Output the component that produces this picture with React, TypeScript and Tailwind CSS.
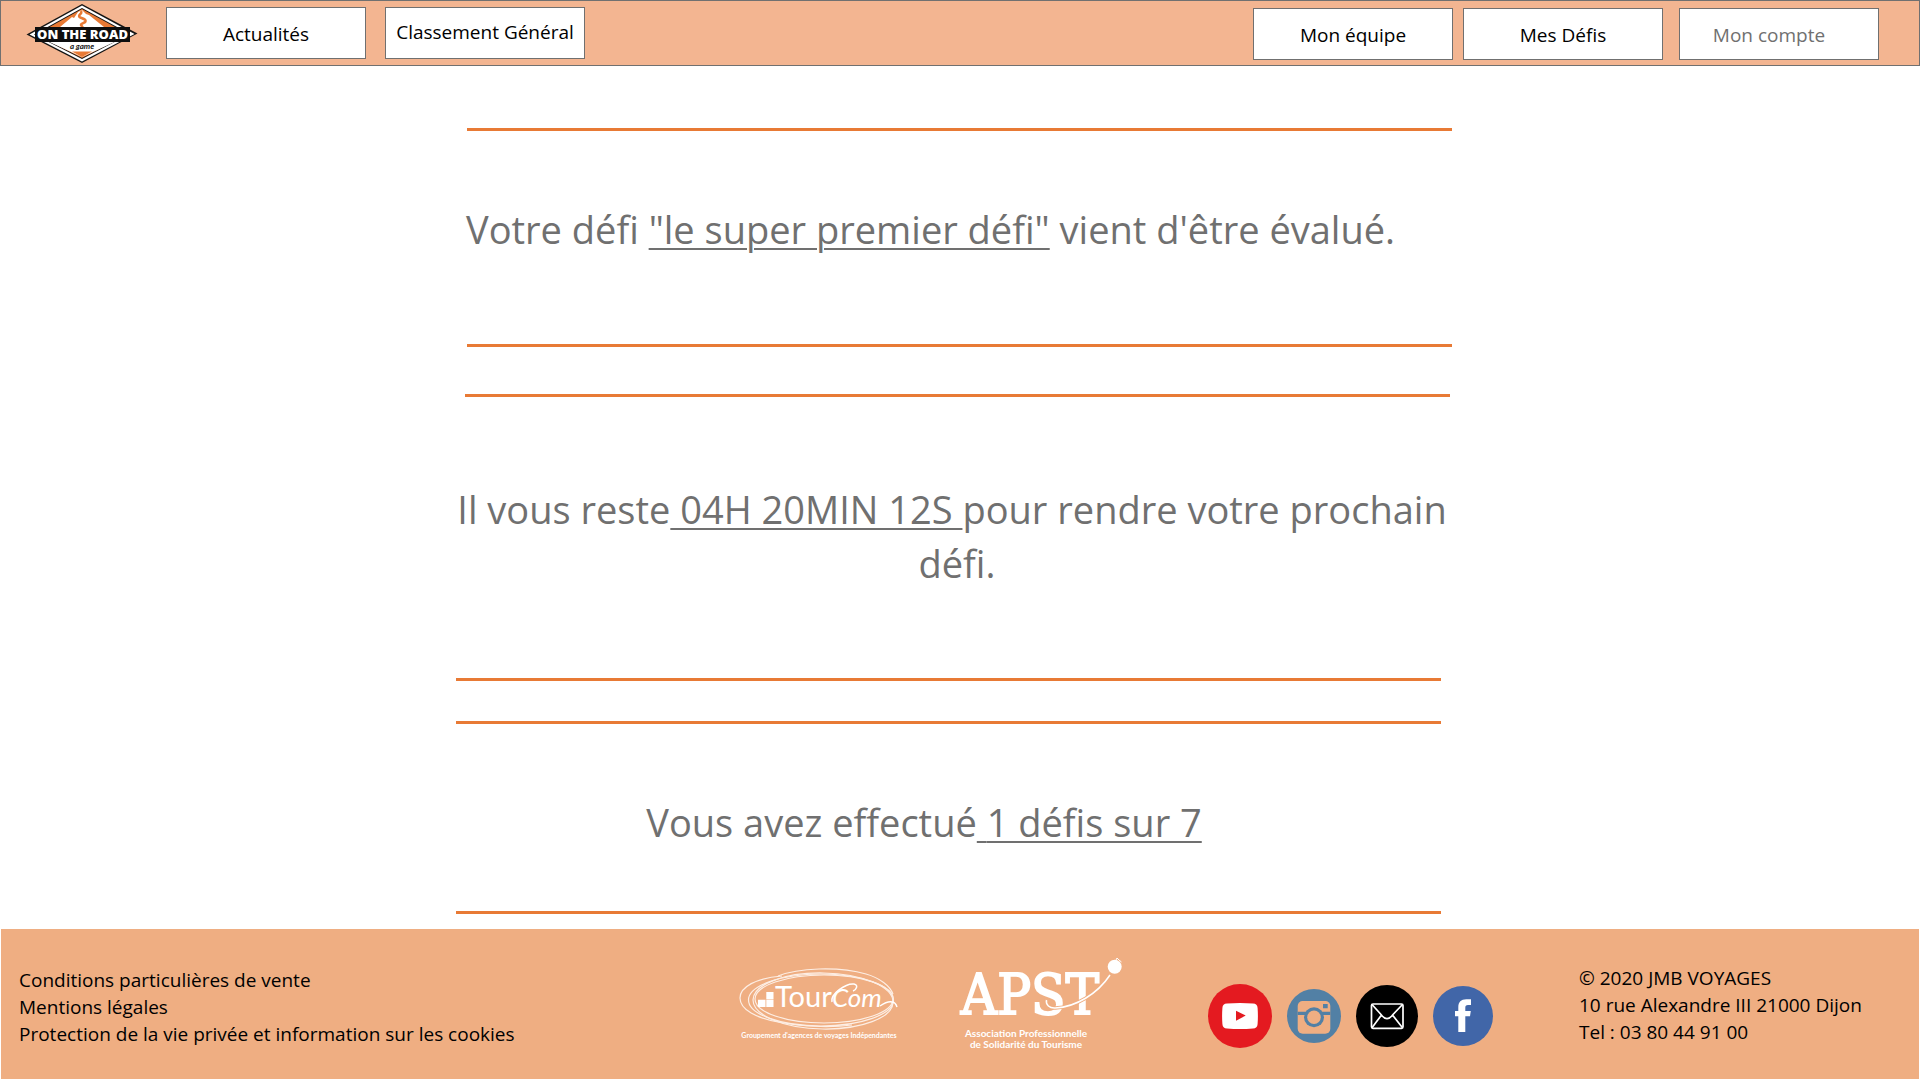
import type { ReactNode } from "react";

function RoadLogo() {
  return (
    <svg viewBox="0 0 112 60" className="h-[60px] w-28" role="img" aria-label="On the Road, a game">
      <path d="M.5 31.500 56 1l55.500 29.500L56 60z" fill="#141414" />
      <path d="M3.500 31.500 56 2.500l52.500 28.500L56 58.500z" fill="#fff" />
      <path d="M8 31.500 56 5l48 26L56 56z" fill="#141414" />
      <path d="M10 31.500 56 6l46 25L56 55z" fill="#e87a35" />
      <path d="M34 24 46 14l2 1 4-6 4-2 4 4 3 1 15 12z" fill="#fff" />
      <path d="M54.500 8c3 2-3 4-1 6 2 1.500 7 2 6 4.500-.5 1.500-5 2-4.500 3.500l2 3" fill="none" stroke="#e87a35" strokeWidth="2.500" />
      <path d="M17 36h78L56 54z" fill="#fff" />
      <path d="M46 48.500h20L56 54z" fill="#e87a35" />
      <path d="M9 24h95v15H9z" fill="#0e0e0e" />
      <text x="56.500" y="36.200" textAnchor="middle" fill="#fff" className="font-['Open_Sans'] text-[13px] font-extrabold">
        ON THE ROAD
      </text>
      <text x="56" y="45.500" textAnchor="middle" fill="#141414" className="font-['Lato'] text-[8px] font-bold italic">
        a game
      </text>
    </svg>
  );
}

function TourComLogo() {
  return (
    <svg viewBox="0 0 200 120" className="h-[120px] w-[200px] shrink-0" role="img" aria-label="TourCom">
      <g fill="none" stroke="#fdeee4" strokeWidth="1.200">
        <ellipse cx="101" cy="60" rx="72.500" ry="26" />
        <ellipse cx="104" cy="59" rx="69" ry="24" />
        <ellipse cx="103" cy="61" rx="70" ry="28" transform="rotate(1 103 61)" />
        <path d="M62 36C36 38 20 47 20 58c0 12 17 20 38 24 22 4 50 6 74 3" />
        <path d="M58 36c20-8 60-10 88-2 14 4 24 12 27 20" />
      </g>
      <path d="M46.300 52h7.200v7.300h-7.200zM38 59.800h7.500V67H38zM46.300 59.800h7.200V67h-7.200z" fill="#fff" />
      <text x="55" y="67" fill="#fff" className="font-['Lato'] text-[29px] font-normal">
        Tour
      </text>
      <text x="112" y="67" fill="#fff" className="font-['Lato'] text-[26px] font-normal italic">
        Com
      </text>
      <path d="M112 62c-2-8 14-19 22-18 5 1 2 6-1 7M160 66c3-2 8-5 12-4 3 0 4 2 5 5" fill="none" stroke="#fff" strokeWidth="1.500" />
      <text x="99" y="98" textAnchor="middle" fill="#fff" className="font-['Lato'] text-[7px] font-bold">
        Groupement d'agences de voyages Indépendantes
      </text>
    </svg>
  );
}

function ApstLogo() {
  return (
    <svg viewBox="0 0 200 120" className="h-[120px] w-[200px] shrink-0" role="img" aria-label="APST">
      <text x="90" y="74" textAnchor="middle" fill="#fff" stroke="#fff" strokeWidth="1.800" className="font-['DejaVu_Serif_Condensed','DejaVu_Serif'] text-[56px]">
        APST
      </text>
      <path d="M106.500 60c-1 5 3 8.500 9 8 20-1 42-14 54.500-33" fill="none" stroke="#efae82" strokeWidth="3.500" />
      <path d="M106.500 60c-1 5 3 8.500 9 8 20-1 42-14 54.500-33" fill="none" stroke="#fff" strokeWidth="1.500" />
      <circle cx="174.700" cy="26.700" r="7" fill="#fff" />
      <path d="m176 20 1-2 2 2 2.500 2" fill="none" stroke="#fff" strokeWidth="1" />
      <g fill="#fff" textAnchor="middle" className="font-['Lato'] text-[10px] font-bold">
        <text x="86" y="96.500">Association Professionnelle</text>
        <text x="86" y="107.500">de Solidarité du Tourisme</text>
      </g>
    </svg>
  );
}

function YouTube() {
  return (
    <svg viewBox="-32 -32 64 64" className="size-16">
      <circle r="32" fill="#e41a20" />
      <path d="M-13-12.500Q0-13.500 13-12.500c3 .2 4.400 1.500 4.600 4.500q.6 8 0 16c-.2 3-1.600 4.300-4.600 4.500q-13 1-26 0c-3-.2-4.400-1.500-4.600-4.500q-.6-8 0-16c.2-3 1.600-4.300 4.600-4.500z" fill="#fff" />
      <path d="M-4-5.300 5.700-.4-4 4.700z" fill="#e41a20" />
    </svg>
  );
}

function Instagram() {
  return (
    <svg viewBox="-27 -27 54 54" className="size-[54px]">
      <circle r="27" fill="#5280a5" />
      <rect x="-16.300" y="-15" width="32.600" height="32.700" rx="5" fill="#efae82" />
      <path d="M-16.300-4.200h32.600v3.200h-32.600zM9-12h4.700v4.300H9z" fill="#5280a5" />
      <circle cy="1.300" r="10" fill="#5280a5" />
      <circle cy="1.300" r="6.800" fill="#efae82" />
    </svg>
  );
}

function Mail() {
  return (
    <svg viewBox="-31 -31 62 62" className="size-[62px]">
      <circle r="31" />
      <g fill="none" stroke="#fff" strokeWidth="1.700">
        <rect x="-15.500" y="-12" width="31.500" height="24.300" rx="1.500" />
        <path d="M-15-11.500-6-1.500C-2 4 2 4 6-1.500l9.500-10M-5.500-1-15 11.800M5.500-1l10 12.800" />
      </g>
    </svg>
  );
}

function Facebook() {
  return (
    <svg viewBox="-30 -30 60 60" className="size-[60px]">
      <circle r="30" fill="#4166a8" />
      <path d="M-4.700 16V.3H-8V-5h3.300v-3.500c0-5.500 2.700-8.200 8-8.200H8v5.700H5c-2 0-2.700.8-2.700 2.700V-5h5.500L7 .3H2.300V16z" fill="#fff" />
    </svg>
  );
}

function NavButton({ children, className = "pt-0.5" }: { children: ReactNode; className?: string }) {
  return (
    <button type="button" className={`h-[52px] w-[200px] border border-[#707070] bg-white whitespace-nowrap ${className}`}>
      {children}
    </button>
  );
}

function Rule({ className = "" }: { className?: string }) {
  return <hr className={`h-[3px] w-full max-w-[985px] border-0 bg-[#e87a35] ${className}`} />;
}

export default function App() {
  return (
    <div className="flex min-h-screen flex-col bg-white font-['Open_Sans',sans-serif] text-[19px] leading-[27px] text-black">
      <header className="flex h-[66px] items-start justify-between border border-[#707070] bg-[#f3b591] pr-10 pl-[25px]">
        <div className="flex items-start">
          <a href="#accueil" className="mt-0.5 mr-7 block">
            <RoadLogo />
          </a>
          <nav className="mt-1.5 flex gap-[19px]">
            <NavButton>Actualités</NavButton>
            <NavButton className="pb-0.5">Classement Général</NavButton>
          </nav>
        </div>
        <nav className="mt-[7px] flex">
          <NavButton className="mr-2.5 pt-0.5">Mon équipe</NavButton>
          <NavButton className="mr-4 pt-0.5">Mes Défis</NavButton>
          <NavButton className="pt-0.5 pr-5 text-[#707070]">Mon compte</NavButton>
        </nav>
      </header>

      <main className="mx-auto w-full max-w-[1008px] flex-1 pt-[62px] pb-[15px] text-[38px] leading-[54px] text-[#707070]">
        <section>
          <Rule className="ml-[11px]" />
          <p className="mt-[71px] mb-[88px] ml-2.5">
            Votre défi{" "}
            <a href="#defi" className="underline decoration-2 underline-offset-4">
              "le super premier défi"
            </a>{" "}
            vient d'être évalué.
          </p>
          <Rule className="ml-[11px]" />
        </section>
        <section className="mt-[47px]">
          <Rule className="ml-[9px]" />
          <p className="mt-[85px] mb-[88px] max-w-[992px] text-center">
            Il vous reste
            <span className="underline decoration-2 underline-offset-4"> 04H 20MIN 12S </span>
            pour rendre votre prochain
            <br />
            &nbsp;défi.
          </p>
          <Rule />
        </section>
        <section className="mt-10">
          <Rule />
          <p className="mt-[71px] mb-[62px] max-w-[936px] text-center">
            Vous avez effectué
            <a href="#defis" className="underline decoration-2 underline-offset-4">
              {" "}1 défis sur 7
            </a>
          </p>
          <Rule />
        </section>
      </main>

      <footer className="mx-px mb-px flex min-h-[150px] items-start bg-[#efae82] pl-[18px]">
        <ul className="flex-1 pt-[38px]">
          <li><a href="#conditions">Conditions particulières de vente</a></li>
          <li><a href="#mentions">Mentions légales</a></li>
          <li><a href="#confidentialite">Protection de la vie privée et information sur les cookies</a></li>
        </ul>
        <div className="flex gap-5 pt-[11px]">
          <TourComLogo />
          <ApstLogo />
        </div>
        <div className="mr-[86px] ml-[68px] flex items-center gap-[15px] pt-[55px]">
          <a href="#youtube" aria-label="YouTube"><YouTube /></a>
          <a href="#instagram" aria-label="Instagram"><Instagram /></a>
          <a href="#contact" aria-label="E-mail"><Mail /></a>
          <a href="#facebook" aria-label="Facebook"><Facebook /></a>
        </div>
        <address className="w-[340px] pt-9 not-italic">
          © 2020 JMB VOYAGES
          <br />
          10 rue Alexandre III 21000 Dijon
          <br />
          Tel : 03 80 44 91 00
        </address>
      </footer>
    </div>
  );
}
